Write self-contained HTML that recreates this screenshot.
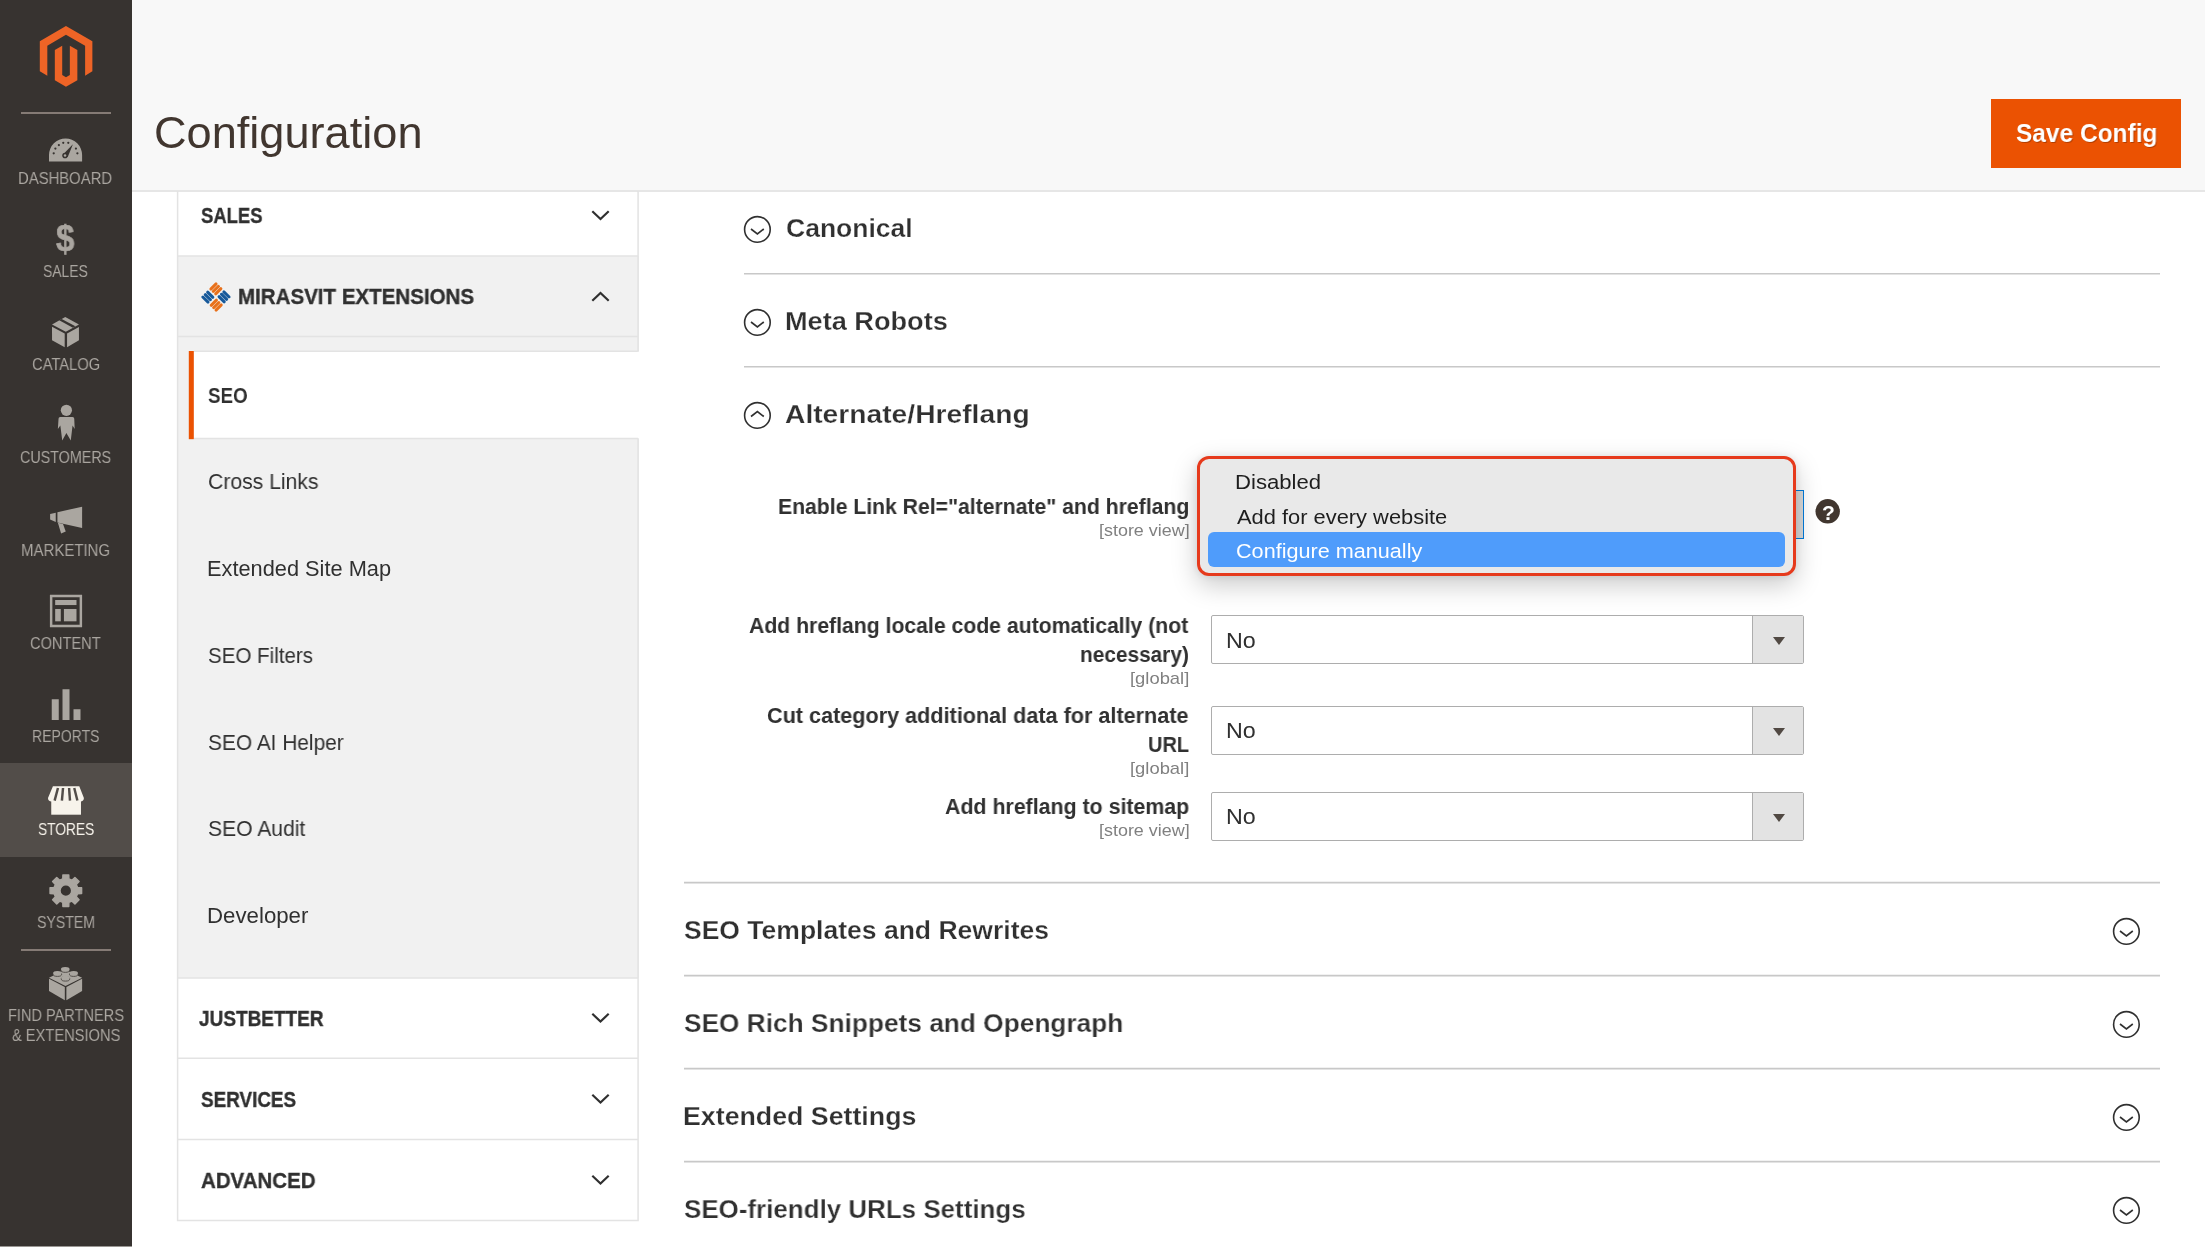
<!DOCTYPE html>
<html lang="en"><head><meta charset="utf-8"><title>Configuration / Settings / Stores / Magento Admin</title>
<style>
html,body{margin:0;padding:0;}
body{width:2205px;height:1247px;position:relative;overflow:hidden;background:#fff;font-family:'Liberation Sans',sans-serif;}
.a{position:absolute;}
.t{position:absolute;transform-origin:0 0;will-change:transform;white-space:pre;line-height:1;font-family:'Liberation Sans',sans-serif;}
svg{position:absolute;overflow:visible;}
.sel{width:593px;height:49px;box-sizing:border-box;border:1.5px solid #adadad;border-radius:2px;background:#fff;}
.sel:before{content:"";position:absolute;right:0;top:0;width:50.5px;height:100%;background:#e3e3e3;border-left:1.5px solid #adadad;}
.sel:after{content:"";position:absolute;right:18px;top:20.5px;border-left:6px solid transparent;border-right:6px solid transparent;border-top:8px solid #514943;}

</style></head>
<body>
<!-- header -->
<div class="a" style="left:132px;top:0;width:2073px;height:190px;background:#f8f8f8;"></div>
<div class="a" style="left:132px;top:190px;width:2073px;height:2px;background:#e6e6e6;"></div>
<!-- sidebar -->
<div class="a" style="left:0;top:0;width:132px;height:1247px;background:#373330;"></div>
<div class="a" style="left:0;top:763px;width:132px;height:93.5px;background:#524d49;"></div>
<div class="a" style="left:21px;top:112px;width:90px;height:2px;background:#857b75;"></div>
<div class="a" style="left:21px;top:949px;width:90px;height:2px;background:#857b75;"></div>
<div class="a" style="left:0;top:1245.5px;width:132px;height:1.5px;background:#9a9793;"></div>
<!-- save button -->
<div class="a" style="left:1991px;top:99px;width:190px;height:69px;background:#eb5202;"></div>
<!-- left tabs panel -->
<div class="a" style="left:178px;top:256px;width:460.5px;height:722px;background:#f1f1f1;"></div>
<div class="a" style="left:194px;top:352px;width:446px;height:86px;background:#fff;"></div>
<svg style="left:0;top:0" width="2205" height="1247" viewBox="0 0 2205 1247">
<rect x="188.8" y="351" width="5" height="88.2" fill="#eb5202"/>
<g stroke="#e3e3e3" stroke-width="1.5" fill="none">
<path d="M177.6,191 V1220.6 H638.1 V438.5 M638.1,351.3 V191"/>
<path d="M178,256 H638"/><path d="M178,336.5 H638"/><path d="M194,351.3 H637 Q638.1,351.3 638.1,350"/><path d="M194,438.5 H638.1"/>
<path d="M178,978 H638"/><path d="M178,1058.25 H638"/><path d="M178,1139.5 H638"/>
</g>
<g stroke="#c8c8c8" stroke-width="1.7" fill="none">
<path d="M744,273.75 H2160"/><path d="M744,366.75 H2160"/>
<path d="M684,882.6 H2160"/><path d="M684,975.6 H2160"/><path d="M684,1068.6 H2160"/><path d="M684,1161.6 H2160"/>
</g>
</svg>
<!-- selects -->
<div class="a sel" style="left:1211px;top:615px;"></div>
<div class="a sel" style="left:1211px;top:706px;"></div>
<div class="a sel" style="left:1211px;top:792px;"></div>
<!-- magento logo : region [0,0,276,156] zoom 2205x1246 -->
<svg style="left:0;top:0" width="276" height="156" viewBox="0 0 2205 1246"><g fill="#ee6426">
<path d="M527,208 L738,330 L738,570 L680,605 L680,365 L527,278 L378,365 L378,605 L318,570 L318,330 Z"/>
<path d="M438,400 L497,365 L497,600 L527,618 L558,600 L558,365 L618,400 L618,640 L527,692 L438,640 Z"/>
</g></svg>
<!-- dashboard : region [26,125,106,265] zoom 713x1247 -->
<svg style="left:26px;top:125px" width="80" height="140" viewBox="0 0 713 1247">
<path d="M205,325 L205,268 A147.5,148 0 0 1 500,268 L500,325 Z" fill="#aaa6a0"/>
<g fill="#373330"><circle cx="247" cy="252" r="10"/><circle cx="262" cy="210" r="10"/><circle cx="293" cy="178" r="10"/><circle cx="332" cy="158" r="10"/><circle cx="377" cy="158" r="10"/><circle cx="445" cy="210" r="10"/><circle cx="458" cy="252" r="10"/>
<path d="M418,172 L372,285 L330,262 Z"/><circle cx="348" cy="272" r="25"/></g>
<circle cx="348" cy="272" r="11" fill="#aaa6a0"/>
</svg>
<!-- catalog : region [26,300,106,440] -->
<svg style="left:26px;top:300px" width="80" height="140" viewBox="0 0 713 1247"><g fill="#aaa6a0">
<path d="M350,152 L472,218 L355,283 L232,218 Z"/>
<path d="M232,238 L345,298 L345,420 L232,358 Z"/>
<path d="M366,298 L472,240 L472,358 L366,420 Z"/></g>
<path d="M296,180 L318,168 L440,234 L418,246 Z" fill="#373330"/>
</svg>
<!-- customers : region [26,395,106,535] -->
<svg style="left:26px;top:395px" width="80" height="140" viewBox="0 0 713 1247"><g fill="#aaa6a0">
<circle cx="360" cy="136" r="50"/>
<path d="M305,195 Q290,195 290,212 L284,302 L306,272 L323,406 L360,338 L399,406 L415,272 L434,302 L430,212 Q430,195 415,195 Z"/></g>
</svg>
<!-- marketing + content : region [26,490,106,630] -->
<svg style="left:26px;top:490px" width="80" height="140" viewBox="0 0 713 1247"><g fill="#aaa6a0">
<path d="M215,214 L265,202 L265,284 L215,262 Z"/>
<path d="M280,198 L500,148 L500,338 L280,290 Z"/>
<path d="M284,292 L330,302 L354,370 L313,387 Z"/>
<path d="M213,933 H500 V1222 H213 Z M235,955 V1200 H478 V955 Z" fill-rule="evenodd"/>
<rect x="260" y="980" width="190" height="45"/>
<rect x="260" y="1060" width="50" height="110"/>
<rect x="338" y="1060" width="112" height="110"/>
</g></svg>
<!-- reports : bars -->
<svg style="left:0;top:0" width="132" height="1247" viewBox="0 0 132 1247"><g fill="#aaa6a0">
<rect x="51.75" y="699.25" width="7" height="20.75"/><rect x="62.5" y="689.25" width="7" height="30.75"/><rect x="73.5" y="709.25" width="7" height="10.75"/>
</g></svg>
<!-- stores + system : region [26,770,106,910] -->
<svg style="left:26px;top:770px" width="80" height="140" viewBox="0 0 713 1247">
<g fill="#f7f3eb">
<path d="M240,145 L475,145 L516,250 Q516,280 484,280 Q452,280 452,262 Q452,280 420,280 Q388,280 388,262 Q388,280 356,280 Q324,280 324,262 Q324,280 292,280 Q260,280 260,262 Q260,280 228,280 Q196,280 196,250 Z"/>
<rect x="225" y="262" width="265" height="136"/>
</g>
<g stroke="#524d49" stroke-width="22" stroke-linecap="butt" fill="none">
<path d="M285,160 L255,272"/><path d="M330,160 L320,272"/><path d="M384,160 L392,272"/><path d="M430,160 L458,272"/>
</g>
<g fill="#aaa6a0" transform="translate(355,1075)">
<path fill-rule="evenodd" stroke="#aaa6a0" stroke-width="13" stroke-linejoin="round" d="M-27.0,-104.6 L-26.1,-140.6 L26.1,-140.6 L27.0,-104.6 L54.8,-93.1 L81.0,-117.9 L117.9,-81.0 L93.1,-54.8 L104.6,-27.0 L140.6,-26.1 L140.6,26.1 L104.6,27.0 L93.1,54.8 L117.9,81.0 L81.0,117.9 L54.8,93.1 L27.0,104.6 L26.1,140.6 L-26.1,140.6 L-27.0,104.6 L-54.8,93.1 L-81.0,117.9 L-117.9,81.0 L-93.1,54.8 L-104.6,27.0 L-140.6,26.1 L-140.6,-26.1 L-104.6,-27.0 L-93.1,-54.8 L-117.9,-81.0 L-81.0,-117.9 L-54.8,-93.1 Z M52,0 A52,52 0 1 0 -52,0 A52,52 0 1 0 52,0 Z"/>
</g>
</svg>
<!-- lego : region [26,940,106,1080] -->
<svg style="left:26px;top:940px" width="80" height="140" viewBox="0 0 713 1247">
<g fill="#aaa6a0">
<path d="M205,335 L350,265 L500,335 L352,410 Z"/>
<path d="M205,345 L346,418 L346,537 L205,455 Z"/>
<path d="M360,418 L500,345 L500,455 L360,537 Z"/>
</g>
<g fill="#aaa6a0" stroke="#4a4541" stroke-width="8">
<ellipse cx="350" cy="268" rx="38" ry="20"/><ellipse cx="280" cy="304" rx="38" ry="20"/><ellipse cx="425" cy="304" rx="38" ry="20"/><ellipse cx="352" cy="346" rx="38" ry="20"/>
</g>
<g fill="#aaa6a0">
<ellipse cx="350" cy="258" rx="38" ry="18"/><ellipse cx="280" cy="294" rx="38" ry="18"/><ellipse cx="425" cy="294" rx="38" ry="18"/><ellipse cx="352" cy="336" rx="38" ry="18"/>
</g>
</svg>
<!-- mirasvit logo -->
<svg style="left:0;top:0" width="300" height="340" viewBox="0 0 300 340">
<g transform="translate(216,296.8) rotate(45)">
<g fill="#e8711c">
<rect x="-10.6" y="-10.6" width="3.05" height="10.2" rx="1.4"/><rect x="-7.2" y="-10.6" width="3.05" height="10.2" rx="1.4"/><rect x="-3.8" y="-10.6" width="3.05" height="10.2" rx="1.4"/>
<rect x="1.1" y="0.6" width="3.05" height="10.2" rx="1.4"/><rect x="4.5" y="0.6" width="3.05" height="10.2" rx="1.4"/><rect x="7.9" y="0.6" width="3.05" height="10.2" rx="1.4"/>
</g>
<g fill="#17599a">
<rect x="0.6" y="-10.6" width="10.2" height="3.05" rx="1.4"/><rect x="0.6" y="-7.2" width="10.2" height="3.05" rx="1.4"/><rect x="0.6" y="-3.8" width="10.2" height="3.05" rx="1.4"/>
<rect x="-10.6" y="1.1" width="10.2" height="3.05" rx="1.4"/><rect x="-10.6" y="4.5" width="10.2" height="3.05" rx="1.4"/><rect x="-10.6" y="7.9" width="10.2" height="3.05" rx="1.4"/>
</g>
</g>
</svg>
<!-- chevrons left tabs -->
<svg style="left:0;top:0" width="700" height="1247" viewBox="0 0 700 1247"><g fill="none" stroke="#303030" stroke-width="2.2">
<path d="M592.3,211.3 L600.5,219 L608.7,211.3"/>
<path d="M592.3,300.8 L600.5,293 L608.7,300.8"/>
<path d="M592.3,1013.8 L600.5,1021.5 L608.7,1013.8"/>
<path d="M592.3,1094.8 L600.5,1102.5 L608.7,1094.8"/>
<path d="M592.3,1175.8 L600.5,1183.5 L608.7,1175.8"/>
</g></svg>
<!-- circle toggles -->
<svg style="left:0;top:0" width="2205" height="1247" viewBox="0 0 2205 1247"><g fill="none" stroke="#303030" stroke-width="1.6">
<circle cx="757.4" cy="229.4" r="12.8"/><path d="M751,229 L757.4,234 L763.8,229"/>
<circle cx="757.4" cy="322.4" r="12.8"/><path d="M751,322 L757.4,327 L763.8,322"/>
<circle cx="757.4" cy="415.4" r="12.8"/><path d="M751,416.5 L757.4,411.5 L763.8,416.5"/>
<circle cx="2126.4" cy="931.4" r="12.8"/><path d="M2120,931 L2126.4,936 L2132.8,931"/>
<circle cx="2126.4" cy="1024.4" r="12.8"/><path d="M2120,1024 L2126.4,1029 L2132.8,1024"/>
<circle cx="2126.4" cy="1117.4" r="12.8"/><path d="M2120,1117 L2126.4,1122 L2132.8,1117"/>
<circle cx="2126.4" cy="1210.4" r="12.8"/><path d="M2120,1210 L2126.4,1215 L2132.8,1210"/>
</g>
<circle cx="1827.7" cy="511.3" r="12.2" fill="#41362f"/>
</svg>

<span class="t" style="left:18.38px;top:170.00px;font-size:16.5px;font-weight:400;color:#aaa6a0;transform:scaleX(0.9000);">DASHBOARD</span>
<span class="t" style="left:43.37px;top:263.00px;font-size:16.5px;font-weight:400;color:#aaa6a0;transform:scaleX(0.8406);">SALES</span>
<span class="t" style="left:31.83px;top:356.00px;font-size:16.5px;font-weight:400;color:#aaa6a0;transform:scaleX(0.8926);">CATALOG</span>
<span class="t" style="left:20.10px;top:449.00px;font-size:16.5px;font-weight:400;color:#aaa6a0;transform:scaleX(0.8675);">CUSTOMERS</span>
<span class="t" style="left:21.36px;top:542.00px;font-size:16.5px;font-weight:400;color:#aaa6a0;transform:scaleX(0.9084);">MARKETING</span>
<span class="t" style="left:30.34px;top:635.00px;font-size:16.5px;font-weight:400;color:#aaa6a0;transform:scaleX(0.8857);">CONTENT</span>
<span class="t" style="left:31.94px;top:728.00px;font-size:16.5px;font-weight:400;color:#aaa6a0;transform:scaleX(0.8484);">REPORTS</span>
<span class="t" style="left:37.62px;top:821.00px;font-size:16.5px;font-weight:400;color:#f7f3eb;transform:scaleX(0.8333);">STORES</span>
<span class="t" style="left:36.86px;top:914.00px;font-size:16.5px;font-weight:400;color:#aaa6a0;transform:scaleX(0.8555);">SYSTEM</span>
<span class="t" style="left:7.65px;top:1007.00px;font-size:16.5px;font-weight:400;color:#aaa6a0;transform:scaleX(0.8822);">FIND PARTNERS</span>
<span class="t" style="left:11.56px;top:1027.00px;font-size:16.5px;font-weight:400;color:#aaa6a0;transform:scaleX(0.8882);">&amp; EXTENSIONS</span>
<span class="t" style="left:56.46px;top:220.00px;font-size:37.6px;font-weight:700;color:#aaa6a0;transform:scaleX(0.8800);-webkit-text-stroke:0.6px #aaa6a0;">$</span>
<span class="t" style="left:1821.63px;top:502.00px;font-size:21px;font-weight:700;color:#ffffff;transform:scaleX(0.9714);">?</span>
<span class="t" style="left:153.72px;top:111.00px;font-size:44.5px;font-weight:400;color:#41362f;transform:scaleX(1.0143);">Configuration</span>
<span class="t" style="left:200.87px;top:205.00px;font-size:22px;font-weight:700;color:#303030;transform:scaleX(0.8376);-webkit-text-stroke:0.35px #303030;">SALES</span>
<span class="t" style="left:237.83px;top:286.00px;font-size:21.7px;font-weight:700;color:#303030;transform:scaleX(0.9464);-webkit-text-stroke:0.35px #303030;">MIRASVIT EXTENSIONS</span>
<span class="t" style="left:199.03px;top:1008.00px;font-size:21.7px;font-weight:700;color:#303030;transform:scaleX(0.8763);-webkit-text-stroke:0.35px #303030;">JUSTBETTER</span>
<span class="t" style="left:200.60px;top:1089.00px;font-size:21.7px;font-weight:700;color:#303030;transform:scaleX(0.8701);-webkit-text-stroke:0.35px #303030;">SERVICES</span>
<span class="t" style="left:200.78px;top:1170.00px;font-size:21.7px;font-weight:700;color:#303030;transform:scaleX(0.9437);-webkit-text-stroke:0.35px #303030;">ADVANCED</span>
<span class="t" style="left:208.10px;top:385.00px;font-size:21.7px;font-weight:700;color:#303030;transform:scaleX(0.8644);">SEO</span>
<span class="t" style="left:207.77px;top:471.00px;font-size:21.7px;font-weight:400;color:#303030;transform:scaleX(0.9753);">Cross Links</span>
<span class="t" style="left:206.99px;top:558.00px;font-size:21.7px;font-weight:400;color:#303030;transform:scaleX(1.0042);">Extended Site Map</span>
<span class="t" style="left:207.80px;top:645.00px;font-size:21.7px;font-weight:400;color:#303030;transform:scaleX(0.9472);">SEO Filters</span>
<span class="t" style="left:207.79px;top:732.00px;font-size:21.7px;font-weight:400;color:#303030;transform:scaleX(0.9624);">SEO AI Helper</span>
<span class="t" style="left:207.78px;top:818.00px;font-size:21.7px;font-weight:400;color:#303030;transform:scaleX(0.9722);">SEO Audit</span>
<span class="t" style="left:206.95px;top:905.00px;font-size:21.7px;font-weight:400;color:#303030;transform:scaleX(1.0258);">Developer</span>
<span class="t" style="left:786.00px;top:215.00px;font-size:26.5px;font-weight:700;color:#303030;transform:scaleX(0.9980);-webkit-text-stroke:0.25px #fff;">Canonical</span>
<span class="t" style="left:785.21px;top:308.00px;font-size:26.5px;font-weight:700;color:#303030;transform:scaleX(1.0240);-webkit-text-stroke:0.25px #fff;">Meta Robots</span>
<span class="t" style="left:784.70px;top:401.00px;font-size:26.5px;font-weight:700;color:#303030;transform:scaleX(1.0649);-webkit-text-stroke:0.25px #fff;">Alternate/Hreflang</span>
<span class="t" style="left:683.55px;top:917.00px;font-size:26.5px;font-weight:700;color:#303030;transform:scaleX(1.0006);-webkit-text-stroke:0.25px #fff;">SEO Templates and Rewrites</span>
<span class="t" style="left:683.56px;top:1010.00px;font-size:26.5px;font-weight:700;color:#303030;transform:scaleX(0.9913);-webkit-text-stroke:0.25px #fff;">SEO Rich Snippets and Opengraph</span>
<span class="t" style="left:682.53px;top:1103.00px;font-size:26.5px;font-weight:700;color:#303030;transform:scaleX(1.0094);-webkit-text-stroke:0.25px #fff;">Extended Settings</span>
<span class="t" style="left:683.57px;top:1196.00px;font-size:26.5px;font-weight:700;color:#303030;transform:scaleX(0.9791);-webkit-text-stroke:0.25px #fff;">SEO-friendly URLs Settings</span>
<span class="t" style="left:778.06px;top:496.00px;font-size:22px;font-weight:700;color:#303030;transform:scaleX(0.9623);">Enable Link Rel="alternate" and hreflang</span>
<span class="t" style="left:1098.68px;top:522.00px;font-size:17px;font-weight:400;color:#808080;transform:scaleX(1.0539);">[store view]</span>
<span class="t" style="left:749.02px;top:615.00px;font-size:22px;font-weight:700;color:#303030;transform:scaleX(0.9632);">Add hreflang locale code automatically (not</span>
<span class="t" style="left:1080.33px;top:644.00px;font-size:22px;font-weight:700;color:#303030;transform:scaleX(0.9465);">necessary)</span>
<span class="t" style="left:1129.90px;top:670.00px;font-size:17px;font-weight:400;color:#808080;transform:scaleX(1.0810);">[global]</span>
<span class="t" style="left:767.27px;top:705.00px;font-size:22px;font-weight:700;color:#303030;transform:scaleX(0.9824);">Cut category additional data for alternate</span>
<span class="t" style="left:1147.62px;top:734.00px;font-size:22px;font-weight:700;color:#303030;transform:scaleX(0.9075);">URL</span>
<span class="t" style="left:1129.90px;top:760.00px;font-size:17px;font-weight:400;color:#808080;transform:scaleX(1.0810);">[global]</span>
<span class="t" style="left:944.51px;top:796.00px;font-size:22px;font-weight:700;color:#303030;transform:scaleX(0.9701);">Add hreflang to sitemap</span>
<span class="t" style="left:1098.68px;top:822.00px;font-size:17px;font-weight:400;color:#808080;transform:scaleX(1.0539);">[store view]</span>
<span class="t" style="left:1226.34px;top:631.00px;font-size:21.3px;font-weight:400;color:#303030;transform:scaleX(1.0918);">No</span>
<span class="t" style="left:1226.34px;top:721.00px;font-size:21.3px;font-weight:400;color:#303030;transform:scaleX(1.0918);">No</span>
<span class="t" style="left:1226.34px;top:807.00px;font-size:21.3px;font-weight:400;color:#303030;transform:scaleX(1.0918);">No</span>
<span class="t" style="left:2016.39px;top:120.00px;font-size:26px;font-weight:700;color:#ffffff;transform:scaleX(0.9418);text-shadow:1px 1px 0 rgba(0,0,0,.25);">Save Config</span>
<!-- popup -->
<div class="a" style="left:1795px;top:490px;width:9px;height:49px;box-sizing:border-box;border:1.5px solid #007bdb;border-left:0;background:#d9d9d9;"></div>
<div class="a" style="left:1197px;top:455.5px;width:599px;height:120.5px;box-sizing:border-box;border:3px solid #e63a1c;border-radius:12px;background:#e9e9e9;box-shadow:0 9px 26px rgba(0,0,0,.21),0 0 10px rgba(0,0,0,.09);z-index:20;"></div>
<div class="a" style="left:1208px;top:532.2px;width:577.2px;height:34.6px;border-radius:6px;background:#4f9cfb;z-index:21;"></div>
<span class="t" style="left:1234.81px;top:472.00px;font-size:20.5px;font-weight:400;color:#1e1e1e;transform:scaleX(1.0788);z-index:30;">Disabled</span>
<span class="t" style="left:1236.70px;top:507.00px;font-size:20.5px;font-weight:400;color:#1e1e1e;transform:scaleX(1.0665);z-index:30;">Add for every website</span>
<span class="t" style="left:1235.65px;top:541.00px;font-size:20.5px;font-weight:400;color:#ffffff;transform:scaleX(1.0547);z-index:30;">Configure manually</span>

</body></html>
